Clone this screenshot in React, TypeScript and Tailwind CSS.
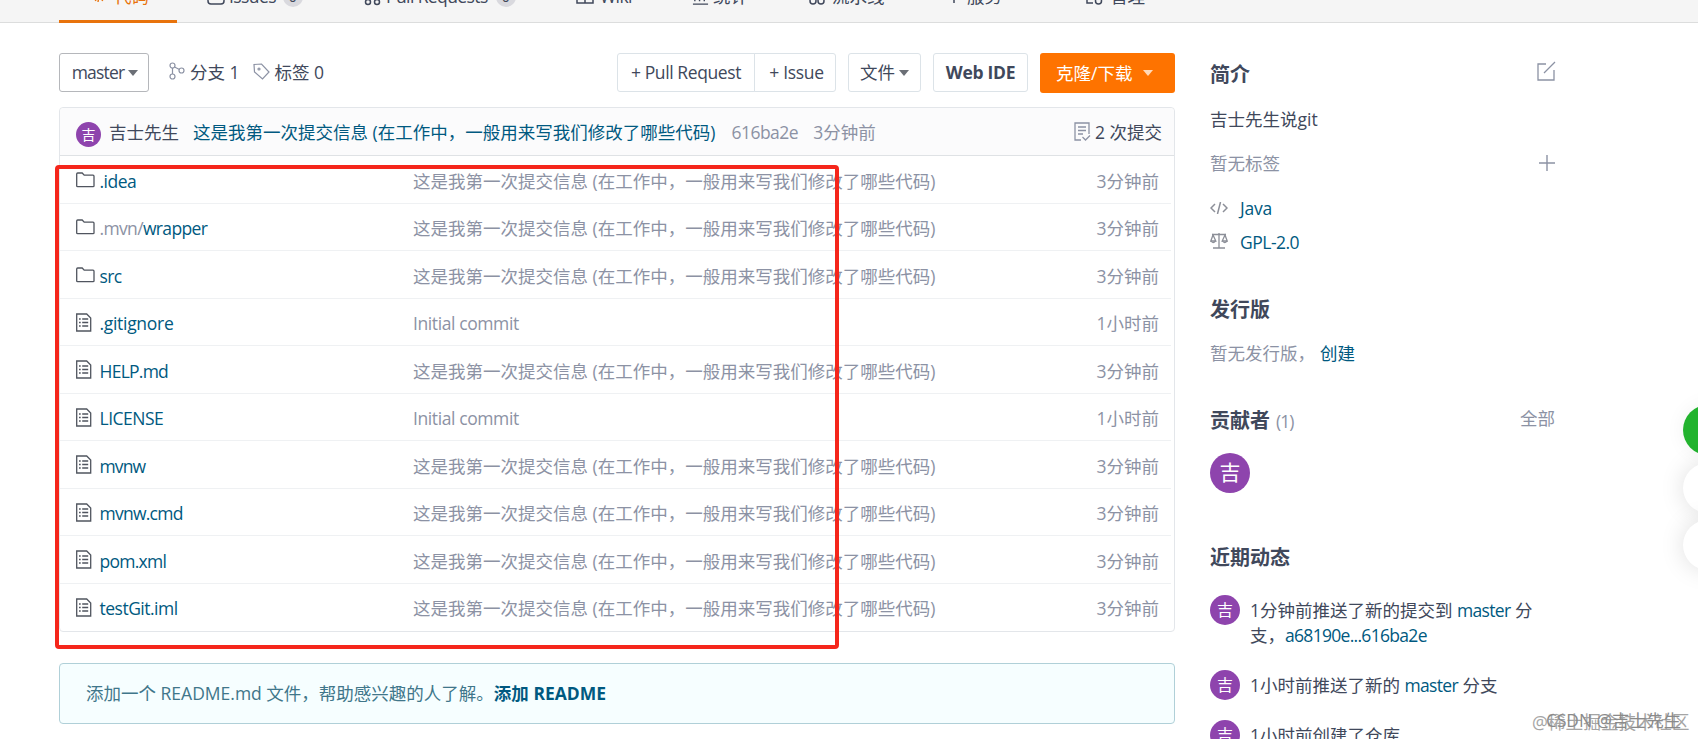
import type { ReactNode } from "react";

const MESSAGE = "这是我第一次提交信息 (在工作中，一般用来写我们修改了哪些代码)";

const FILES = [
  { name: ".idea", folder: true, message: MESSAGE, time: "3分钟前", tracking: "tracking-[-0.5px]" },
  { prefix: ".mvn/", name: "wrapper", folder: true, message: MESSAGE, time: "3分钟前", tracking: "tracking-[-0.65px]" },
  { name: "src", folder: true, message: MESSAGE, time: "3分钟前", tracking: "tracking-[-0.6px]" },
  { name: ".gitignore", message: "Initial commit", time: "1小时前", tracking: "tracking-[-0.3px]" },
  { name: "HELP.md", message: MESSAGE, time: "3分钟前", tracking: "tracking-[-0.75px]" },
  { name: "LICENSE", message: "Initial commit", time: "1小时前", tracking: "tracking-[-0.5px]" },
  { name: "mvnw", message: MESSAGE, time: "3分钟前", tracking: "tracking-[-0.9px]" },
  { name: "mvnw.cmd", message: MESSAGE, time: "3分钟前", tracking: "tracking-[-0.75px]" },
  { name: "pom.xml", message: MESSAGE, time: "3分钟前", tracking: "tracking-[-0.75px]" },
  { name: "testGit.iml", message: MESSAGE, time: "3分钟前", tracking: "tracking-[-0.5px]" },
];

function FolderIcon() {
  return (
    <svg width="19" height="16" viewBox="0 0 19 16" fill="none" stroke="#50555f" strokeWidth="1.3">
      <path d="M.7 14V2q0-1 1-1h4.500l2 2.200H17q1 0 1 1V14q0 .7-1 .7H1.700q-1 0-1-.7z" />
    </svg>
  );
}

function FileIcon() {
  return (
    <svg width="16" height="19" viewBox="0 0 16 19" fill="none" stroke="#50555f" strokeWidth="1.3">
      <path d="M.7 1h10l4 4v13H.7z" />
      <path d="M3 6h1.700M6.200 6h6M3 9.500h1.700M6.200 9.500h6M3 13h1.700M6.200 13h6" />
    </svg>
  );
}

function Caret({ className = "" }: { className?: string }) {
  return <span className={`border-x-[5px] border-t-[6px] border-x-transparent ${className}`} />;
}

function Avatar({ className }: { className: string }) {
  return (
    <span className={`flex shrink-0 items-center justify-center rounded-full bg-[#8e44ad] text-white ${className}`}>
      吉
    </span>
  );
}

function Tab({ className, children }: { className: string; children: ReactNode }) {
  return <div className={`flex items-center whitespace-nowrap ${className}`}>{children}</div>;
}

function Header() {
  return (
    <header className="h-[23px] border-b border-[#dcdddd] bg-[#f5f5f5]">
      <nav className="relative h-[23px] overflow-hidden">
        <div className="absolute -top-[21px] left-[59px] flex h-[44px] leading-[34px]">
          <Tab className="w-[118px] border-b-[3px] border-[#e8730c] pb-[8px] pl-[33px] text-[#e8730c]">
            <svg width="14" height="14" viewBox="0 0 14 14" className="mr-2" fill="none" stroke="currentColor" strokeWidth="1.400">
              <path d="M4 2 1 7l3 5M10 2l3 5-3 5M8 1 6 13" />
            </svg>
            代码
          </Tab>
          <Tab className="ml-[30px] w-[157px] pb-[11px]">
            <svg width="18" height="18" viewBox="0 0 18 18" className="mt-[3px] mr-1" fill="none" stroke="currentColor" strokeWidth="1.500">
              <rect x="1" y="2" width="16" height="14" rx="3" />
            </svg>
            <span className="tracking-[-0.6px]">Issues</span>
            <span className="mt-[3px] ml-[7px] h-5 w-5 rounded-full bg-[#d9d9de] text-center text-[14px] leading-5">0</span>
          </Tab>
          <Tab className="w-[212px] pb-[11px]">
            <svg width="18" height="18" viewBox="0 0 18 18" className="mt-[3px] mr-1" fill="none" stroke="currentColor" strokeWidth="1.500">
              <circle cx="4" cy="14" r="2.500" />
              <circle cx="13" cy="14" r="2.500" />
              <path d="M4 11V3M13 11V4H8" />
            </svg>
            <span className="tracking-[-0.6px]">Pull Requests</span>
            <span className="mt-[3px] ml-[8px] h-5 w-5 rounded-full bg-[#d9d9de] text-center text-[14px] leading-5">0</span>
          </Tab>
          <Tab className="w-[116px] pb-[11px]">
            <svg width="18" height="18" viewBox="0 0 18 18" className="mt-[3px] mr-1.5" fill="none" stroke="currentColor" strokeWidth="1.500">
              <path d="M1 3h16v12H1zM9 3v12" />
            </svg>
            <span className="tracking-[-0.6px]">Wiki</span>
          </Tab>
          <Tab className="w-[116px] pb-[11px]">
            <svg width="17" height="17" viewBox="0 0 18 18" className="mt-[3px] mr-1" fill="none" stroke="currentColor" strokeWidth="1.500">
              <path d="M1 16h16M3 13V8M8 13V3M13 13V6" />
            </svg>
            统计
          </Tab>
          <Tab className="w-[139px] pb-[11px]">
            <svg width="18" height="18" viewBox="0 0 18 18" className="mt-[3px] mr-1.5" fill="none" stroke="currentColor" strokeWidth="1.500">
              <circle cx="5" cy="13" r="3" />
              <circle cx="13" cy="13" r="3" />
              <path d="M5 10V3h8v7" />
            </svg>
            流水线
          </Tab>
          <Tab className="w-[138px] pb-[11px]">
            <svg width="14" height="18" viewBox="0 0 14 18" className="mr-1.5" fill="none" stroke="currentColor" strokeWidth="1.500">
              <path d="M7 1v15M3 5h8v6H3z" />
            </svg>
            服务
          </Tab>
          <Tab className="pb-[11px]">
            <svg width="19" height="18" viewBox="0 0 19 18" className="mt-[3px] mr-1.5" fill="none" stroke="currentColor" strokeWidth="1.500">
              <path d="M8 15H2V2h13v4" />
              <circle cx="13.500" cy="13" r="3" />
            </svg>
            管理
          </Tab>
        </div>
      </nav>
    </header>
  );
}

function Toolbar() {
  return (
    <div className="flex h-10 items-start">
      <button className="flex h-[39px] w-[90px] items-center rounded-[3px] border border-[#b5b7bb] pl-[11px]">
        <span className="w-[54px] tracking-[-0.8px]">master</span>
        <Caret className="ml-[3px] border-t-[#6b6f76]" />
      </button>
      <div className="ml-[20px] flex h-[38px] items-center">
        <svg width="16" height="18" viewBox="0 0 16 18" className="-mt-[2px]" fill="none" stroke="#8c92a4" strokeWidth="1.200">
          <circle cx="3.500" cy="3.500" r="2.500" />
          <circle cx="3.500" cy="14.500" r="2.500" />
          <circle cx="12.500" cy="8.500" r="2.500" />
          <path d="M3.500 6v6M5.500 5l5 2.500" />
        </svg>
        <span className="ml-[5px]">分支 1</span>
        <svg width="17" height="17" viewBox="0 0 17 17" className="-mt-[2px] ml-[13px]" fill="none" stroke="#8c92a4" strokeWidth="1.200">
          <path d="M1 1.500 8.500 1 16 9l-6.500 7L1.500 9z" />
          <circle cx="6" cy="6" r="1" />
        </svg>
        <span className="ml-[5px]">标签 0</span>
      </div>
      <div className="ml-auto flex">
        <button className="h-[39px] w-[138px] rounded-l-[3px] border border-[#dce3e8] text-center tracking-[-0.4px]">
          + Pull Request
        </button>
        <button className="-ml-px h-[39px] w-[82px] rounded-r-[3px] border border-[#dce3e8] pl-[3px] tracking-[-0.3px]">
          + Issue
        </button>
        <button className="ml-3 flex h-[39px] w-[73px] items-center rounded-[3px] border border-[#dce3e8] pl-[11px]">
          文件
          <Caret className="ml-[4px] border-t-[#6b6f76]" />
        </button>
        <button className="ml-3 h-[39px] w-[95px] rounded-[3px] border border-[#dce3e8] font-bold tracking-[-0.3px]">
          Web IDE
        </button>
        <button className="ml-3 flex h-10 w-[135px] items-center rounded-[3px] bg-[#fe7300] pl-4 text-white">
          克隆/下载
          <Caret className="ml-[11px] border-t-[#ffd9b8]" />
        </button>
      </div>
    </div>
  );
}

function FileTable() {
  return (
    <section className="mt-[14px] h-[525px] rounded-[4px] border border-[#e3e6ea]">
      <div className="flex h-[48px] items-center rounded-t-[4px] border-b border-[#dfe2e5] bg-[#fbfbfc] pt-[2px] pr-[12px] pl-4 whitespace-nowrap">
        <Avatar className="mt-[3px] h-[25px] w-[25px] text-[14px]" />
        <span className="ml-2 text-[#40485b]">吉士先生</span>
        <span className="ml-[14px] text-[#005980]">{MESSAGE}</span>
        <span className="ml-[16px] tracking-[-0.5px] text-[#8c92a4]">616ba2e</span>
        <span className="ml-[15px] text-[#8c92a4]">3分钟前</span>
        <span className="ml-auto flex items-center">
          <svg width="17" height="19" viewBox="0 0 17 19" className="-mt-[3px] mr-[4px]" fill="none" stroke="#8c92a4" strokeWidth="1.300">
            <path d="M7 18H1V1h14v11M4 5h8M4 8.500h8M4 12h5M8.500 15l3 3 4.500-4.500" />
          </svg>
          2 次提交
        </span>
      </div>
      {FILES.map((file) => (
        <div
          key={file.name}
          className="mr-[3px] flex h-[47.5px] items-center border-b border-[#eff1f3] pt-[3px] pr-[12px] pl-4 whitespace-nowrap last:border-b-0 last:pt-[2px]"
        >
          <div className="flex w-[337px] items-center">
            <span className="-mt-[2px] w-[23.5px]">{file.folder ? <FolderIcon /> : <FileIcon />}</span>
            <span className={`text-[#005980] ${file.tracking}`}>
              <span className="text-[#8c92a4]">{file.prefix}</span>
              {file.name}
            </span>
          </div>
          <span className={`text-[#8c92a4] ${file.message === MESSAGE ? "" : "tracking-[-0.4px]"}`}>{file.message}</span>
          <span className="ml-auto text-[#8c92a4]">{file.time}</span>
        </div>
      ))}
    </section>
  );
}

function Sidebar() {
  return (
    <aside className="ml-[35px] w-[346px] whitespace-nowrap">
      <div className="mt-[5px] flex h-[34px] items-center justify-between">
        <h2 className="text-[20px] font-bold">简介</h2>
        <svg width="20" height="20" viewBox="0 0 20 20" className="-mt-[9px]" fill="none" stroke="#8c92a4" strokeWidth="1.300">
          <path d="M10 3H2v16h16V9M8 12 19 1" />
        </svg>
      </div>
      <p className="mt-[14px] h-[26px] leading-[26px]">吉士先生说git</p>
      <div className="mt-[18px] flex h-[26px] items-center justify-between pr-[1px] text-[#8c92a4]">
        暂无标签
        <svg width="16" height="16" viewBox="0 0 16 16" fill="none" stroke="#8c92a4" strokeWidth="1.400">
          <path d="M8 0v16M0 8h16" />
        </svg>
      </div>
      <div className="mt-[19px] flex h-[26px] items-center">
        <svg width="18" height="12" viewBox="0 0 18 12" className="mr-3 -mt-[1px]" fill="none" stroke="#8c8f98" strokeWidth="1.500">
          <path d="M5 2 1 6l4 4M13 2l4 4-4 4M10.500 0l-3 12" />
        </svg>
        <span className="tracking-[-0.2px] text-[#005980]">Java</span>
      </div>
      <div className="mt-[8px] flex h-[26px] items-center">
        <svg width="18" height="16" viewBox="0 0 18 16" className="mr-3 -mt-[2px]" fill="none" stroke="#8c8f98" strokeWidth="1.300">
          <path d="M2 1.500h14M9 0v15M3 15h12M3 2 .8 8h5zM15 2l-2.800 6h5z" />
          <path d="M1 8q2 3 4.500 0M12.500 8q2 3 4.500 0" />
        </svg>
        <span className="tracking-[-0.5px] text-[#005980]">GPL-2.0</span>
      </div>

      <h2 className="mt-[40px] h-[30px] text-[20px] leading-[30px] font-bold">发行版</h2>
      <p className="mt-[15px] h-[26px] leading-[26px] text-[#8c92a4]">
        暂无发行版，<span className="ml-[5px] text-[#005980]">创建</span>
      </p>

      <div className="mt-[40px] flex h-[30px] items-center">
        <h2 className="text-[20px] font-bold">贡献者</h2>
        <span className="ml-1.5 tracking-[-1px] text-[#8c92a4]">(1)</span>
        <span className="-mt-[5px] mr-[1px] ml-auto text-[#8c92a4]">全部</span>
      </div>
      <Avatar className="mt-[17px] h-10 w-10 text-[21px]" />

      <h2 className="mt-[50px] h-[30px] text-[20px] leading-[30px] font-bold">近期动态</h2>
      <ul className="mt-[22px] leading-[25px]">
        <li className="flex h-[75px]">
          <Avatar className="h-[30px] w-[30px] text-[16px]" />
          <p className="ml-[10px] pt-[3px]">
            1分钟前推送了新的提交到 <span className="tracking-[-0.7px] text-[#005980]">master</span> 分<br />
            支，<span className="tracking-[-0.7px] text-[#005980]">a68190e...616ba2e</span>
          </p>
        </li>
        <li className="flex h-[50px]">
          <Avatar className="h-[30px] w-[30px] text-[16px]" />
          <p className="ml-[10px] pt-[3px]">
            1小时前推送了新的 <span className="tracking-[-0.7px] text-[#005980]">master</span> 分支
          </p>
        </li>
        <li className="flex h-[50px]">
          <Avatar className="h-[30px] w-[30px] text-[16px]" />
          <p className="ml-[10px] pt-[3px]">1小时前创建了仓库</p>
        </li>
      </ul>
    </aside>
  );
}

export default function App() {
  return (
    <div className="relative h-[739px] w-[1698px] overflow-hidden bg-white font-['Open_Sans','Noto_Sans_CJK_SC',sans-serif] text-[17.5px] text-[#40485b]">
      <Header />
      <div className="flex pt-[30px] pl-[59px]">
        <main className="w-[1116px]">
          <Toolbar />
          <FileTable />
          <div className="mt-[31px] flex h-[61px] items-center rounded-[4px] border-[1.5px] border-[#b0d0d8] bg-[#f6feff] pl-[26px] whitespace-nowrap text-[#40768a]">
            添加一个 README.md 文件，帮助感兴趣的人了解。
            <span className="font-bold text-[#005980]">添加 README</span>
          </div>
        </main>
        <Sidebar />
      </div>

      {/* Highlight frame over the file list */}
      <div className="absolute top-[165px] left-[55px] h-[484px] w-[784px] rounded-[4px] border-4 border-[#f5261b]" />

      {/* Floating buttons at the right edge */}
      <div className="absolute top-[405px] left-[1683px] h-[50px] w-[50px] rounded-full bg-[#22b32e] shadow-[0_0_20px_rgba(0,0,0,0.06)]" />
      <div className="absolute top-[463px] left-[1683px] h-[50px] w-[50px] rounded-full bg-white shadow-[0_0_24px_rgba(0,0,0,0.13)]" />
      <div className="absolute top-[520px] left-[1683px] h-[50px] w-[50px] rounded-full bg-white shadow-[0_0_24px_rgba(0,0,0,0.13)]" />

      <span className="absolute top-[709px] left-[1532px] text-[17.7px] whitespace-nowrap text-[#a5a5a5]">@稀土掘金技术社区</span>
      <span className="absolute top-[708px] left-[1546px] text-[17.3px] whitespace-nowrap text-[#8a8a8a]">CSDN @吉士先生</span>
    </div>
  );
}
